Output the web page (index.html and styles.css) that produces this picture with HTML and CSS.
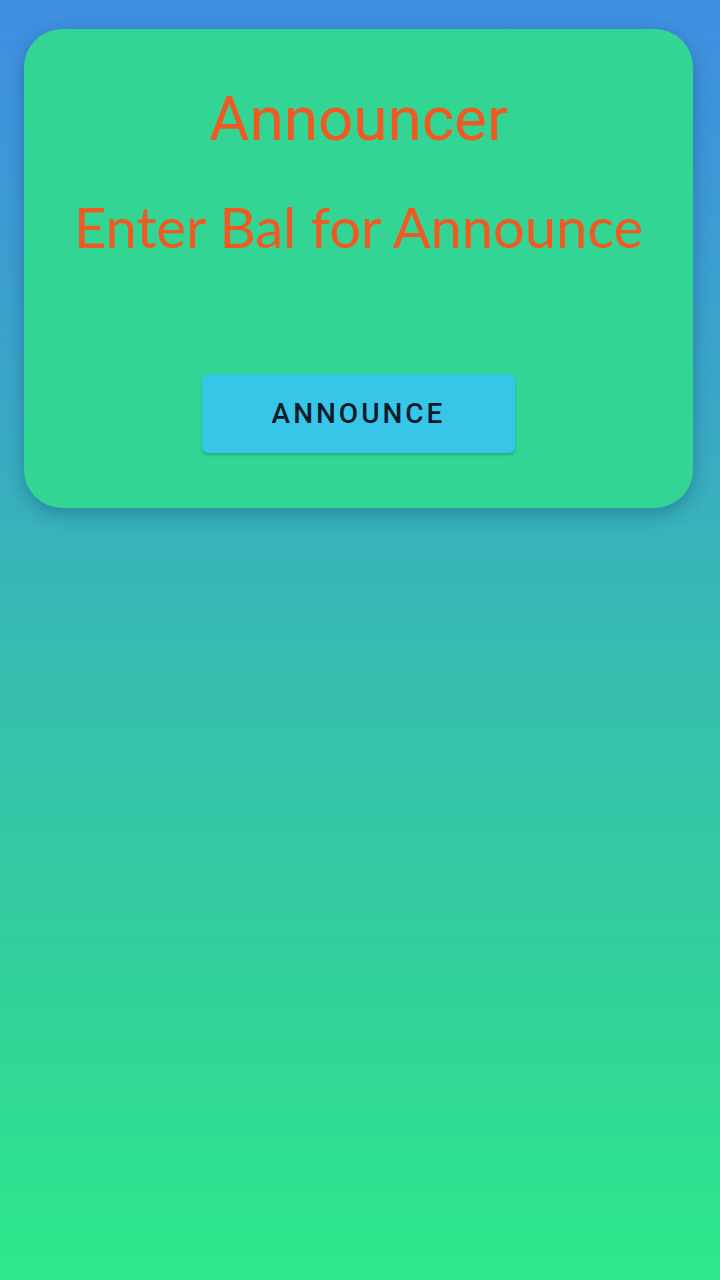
FILE: index.html
```html
<!DOCTYPE html>
<html>
<head>
<meta charset="utf-8">
<link rel="stylesheet" href="styles.css">
</head>
<body>
<div class="screen">
  <div class="card">
    <h1 class="title">Announcer</h1>
    <p class="subtitle">Enter Bal for Announce</p>
    <button class="btn">ANNOUNCE</button>
  </div>
</div>
</body>
</html>
```
FILE: styles.css
```css
html, body {
  margin: 0;
  padding: 0;
}
.screen {
  width: 720px;
  height: 1280px;
  background: linear-gradient(180deg, #3f8ee3 0%, #3aa6c8 30%, #37bcb2 50%, #33cf9c 75%, #2ce98a 100%);
  padding: 29px 27px 0 24px;
  box-sizing: border-box;
}
.card {
  height: 479px;
  background: #33d595;
  border-radius: 38px;
  box-shadow: 0 6px 18px rgba(0, 40, 80, 0.3);
  display: flex;
  flex-direction: column;
  align-items: center;
  box-sizing: border-box;
  padding-top: 59px;
}
.title {
  margin: 0;
  font-family: Roboto, sans-serif;
  font-weight: 400;
  font-size: 62px;
  line-height: 1;
  color: #f05a22;
}
.subtitle {
  margin: 49px 0 0 0;
  font-family: Lato, sans-serif;
  font-weight: 400;
  font-size: 56px;
  line-height: 1;
  color: #f05a22;
}
.btn {
  margin-top: 119px;
  width: 313px;
  height: 79px;
  border: none;
  border-radius: 6px;
  background: #38c6e8;
  box-shadow: 0 2px 3px rgba(0, 60, 60, 0.25);
  font-family: Roboto, sans-serif;
  font-weight: 500;
  font-size: 28px;
  letter-spacing: 3px;
  color: #0d1a2a;
}
```
